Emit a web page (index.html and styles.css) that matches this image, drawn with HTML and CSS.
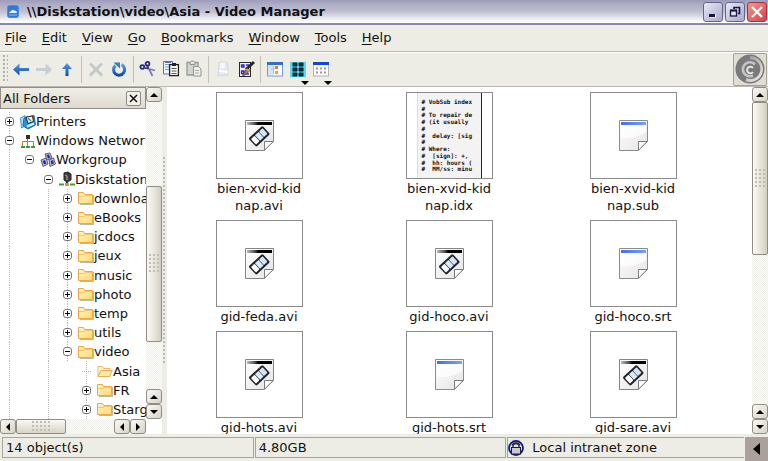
FILE: index.html
```html
<!DOCTYPE html>
<html lang="en">
<head>
<meta charset="utf-8">
<title>\\Diskstation\video\Asia - Video Manager</title>
<link rel="stylesheet" href="styles.css">
</head>
<body>
<svg class="defs" aria-hidden="true">
  <defs>
    <linearGradient id="blue" x1="0" y1="0" x2="0" y2="1"><stop offset="0" stop-color="#5b9be0"/><stop offset="1" stop-color="#0b4fa8"/></linearGradient>
    <linearGradient id="fold" x1="0" y1="0" x2="1" y2="1"><stop offset="0" stop-color="#fff6c8"/><stop offset="1" stop-color="#ffd970"/></linearGradient>
    <linearGradient id="bar" x1="0" y1="0" x2="1" y2="0"><stop offset="0" stop-color="#bbb"/><stop offset=".3" stop-color="#555"/><stop offset=".45" stop-color="#000"/><stop offset="1" stop-color="#000"/></linearGradient>
    <linearGradient id="bluebar" x1="0" y1="0" x2="1" y2="0"><stop offset="0" stop-color="#3f6ff0"/><stop offset="1" stop-color="#7ba0f8"/></linearGradient>
    <linearGradient id="paper" x1="0" y1="0" x2="1" y2="1"><stop offset="0" stop-color="#fff"/><stop offset="1" stop-color="#e4e4e4"/></linearGradient>
    <linearGradient id="ring" x1="0" y1="0" x2="1" y2="1"><stop offset="0" stop-color="#8a8a8a"/><stop offset="1" stop-color="#f4f4f4"/></linearGradient>
  </defs>
  <symbol id="folder" viewBox="0 0 16 14">
    <path d="M2 13.500H15.500V4" fill="none" stroke="#bcb8ae"/>
    <path d="M.500 12.500V1.500H5.500L6.500 3.500H14.500V12.500Z" fill="url(#fold)" stroke="#f2a840"/>
    <path d="M1 5.500H6L7.500 4.500H14" fill="none" stroke="#f8c468"/>
  </symbol>
  <symbol id="folder-open" viewBox="0 0 16 14">
    <path d="M1 12.500V2.500H5.500L6.500 4.500H13V6" fill="#fff3c0" stroke="#ebb968"/>
    <path d="M1 12.500L4 6.500H15.300L12.500 12.500Z" fill="#ffe9a4" stroke="#e2ae58"/>
  </symbol>
  <symbol id="video" viewBox="0 0 29 31">
    <path d="M.5.5H28.500V21.500L19.500 30.500H.5Z" fill="url(#paper)" stroke="#858585"/>
    <rect x="2" y="2" width="25" height="3" fill="url(#bar)"/>
    <g transform="translate(14.300 16.300) rotate(-43)">
      <rect x="-9.500" y="-5.700" width="19" height="11.400" rx="1.500" fill="#20252a"/>
      <rect x="-8" y="-3.700" width="4.800" height="7.400" rx=".8" fill="#fff"/><rect x="-2.500" y="-3.700" width="4.800" height="7.400" fill="#dcebfa"/><rect x="2.800" y="-3.700" width="5" height="7.400" rx=".8" fill="#d3e4f4"/>
    </g>
    <path d="M19.500 30.200V21.500H28.200Z" fill="#fff" stroke="#7c7c7c"/>
  </symbol>
  <symbol id="document" viewBox="0 0 29 31">
    <path d="M.5.5H28.500V21.500L19.500 30.500H.5Z" fill="url(#paper)" stroke="#8b8b8b"/>
    <path d="M2 5H27V12Q17 19 2 18Z" fill="#fff" opacity=".7"/>
    <rect x="2" y="2" width="25" height="3" fill="url(#bluebar)"/>
    <path d="M19.500 30.200V21.500H28.200Z" fill="#fff" stroke="#7c7c7c"/>
  </symbol>
</svg>

<div class="window">
  <header class="titlebar">
    <svg class="app-icon" viewBox="0 0 12 13"><rect x=".5" y=".5" width="11" height="12" rx="2" fill="#2f78dc" stroke="#4d8de6"/><path d="M2 8Q2 6 4 6.500Q5 3.500 7 5.500Q10 5 10 8Z" fill="#eaf3ff"/><path d="M2 10H10" stroke="#8fbcf8"/></svg>
    <h1>\\Diskstation\video\Asia - Video Manager</h1>
    <div class="window-buttons">
      <button type="button" aria-label="Minimize"><svg viewBox="0 0 18 18"><path d="M6 13H12" stroke="#fff" stroke-width="3"/><path d="M5 12.500H11" stroke="#15153f" stroke-width="3"/></svg></button>
      <button type="button" aria-label="Restore"><svg viewBox="0 0 18 18"><path d="M8 6V4.500H13.500V10.500H12M7.500 4.500H14" fill="none" stroke="#15153f" stroke-width="1.600"/><rect x="4.500" y="7.500" width="6" height="5.500" fill="#dfe0ee" stroke="#15153f" stroke-width="1.300"/><path d="M4 7.500H11" stroke="#15153f" stroke-width="2"/></svg></button>
      <button type="button" class="close" aria-label="Close"><svg viewBox="0 0 18 18"><path d="M4 4L14 14M14 4L4 14" stroke="#fff" stroke-width="2.300"/></svg></button>
    </div>
  </header>

  <nav class="menubar">
    <button type="button"><u>F</u>ile</button>
    <button type="button"><u>E</u>dit</button>
    <button type="button"><u>V</u>iew</button>
    <button type="button"><u>G</u>o</button>
    <button type="button"><u>B</u>ookmarks</button>
    <button type="button"><u>W</u>indow</button>
    <button type="button"><u>T</u>ools</button>
    <button type="button"><u>H</u>elp</button>
  </nav>

  <div class="toolbar">
    <span class="handle"></span>
    <button type="button" aria-label="Back"><svg viewBox="0 0 20 24"><path d="M2 12.500L8.500 6.500V11H18V14H8.500V18.500Z" fill="url(#blue)"/></svg></button>
    <button type="button" aria-label="Forward"><svg viewBox="0 0 20 24"><path d="M18 12.500L11.500 6.500V11H2V14H11.500V18.500Z" fill="#c8cdd1"/></svg></button>
    <button type="button" aria-label="Up"><svg viewBox="0 0 20 24"><path d="M10 6L15 12H11.500V19H8.500V12H5Z" fill="url(#blue)"/></svg></button>
    <span class="separator"></span>
    <button type="button" aria-label="Stop"><svg viewBox="0 0 20 24"><path d="M4 6.500L16 18.500M16 6.500L4 18.500" stroke="#c3c7cb" stroke-width="2.800"/></svg></button>
    <button type="button" aria-label="Reload"><svg viewBox="0 0 20 24"><path d="M12.500 7.700A5.500 5.500 0 1 1 6.500 8.500" fill="none" stroke="url(#blue)" stroke-width="3"/><path d="M4.500 5.500H11V11.500Z" fill="#3479c9"/></svg></button>
    <span class="separator"></span>
    <button type="button" aria-label="Cut"><svg viewBox="0 0 20 24"><path d="M7.500 11L17 13.500M9.500 9L14.500 19" stroke="#777dad" stroke-width="1.700"/><path d="M7 11L10 11.500L9.500 8.500" fill="none" stroke="#333d7d" stroke-width="1.300"/><circle cx="4.300" cy="10" r="1.900" fill="none" stroke="#252982" stroke-width="1.800"/><circle cx="9.500" cy="6.800" r="1.900" fill="none" stroke="#252982" stroke-width="1.800"/></svg></button>
    <button type="button" aria-label="Copy"><svg viewBox="0 0 20 24"><path d="M2.500 4.500H11.500V17H2.500Z" fill="#edf3ff" stroke="#6376a4"/><path d="M4 7.500H9M4 10H9M4 12.500H9" stroke="#7ea1d8"/><rect x="4" y="4" width="6" height="2" fill="#5272a4"/><rect x="8.600" y="7.600" width="8.800" height="11" fill="#fff" stroke="#25211c" stroke-width="1.300"/><rect x="11" y="6" width="4" height="3" fill="#25211c"/><path d="M10.500 11.500H15.500M10.500 14H15.500M10.500 16.500H15.500" stroke="#555"/></svg></button>
    <button type="button" aria-label="Paste"><svg viewBox="0 0 20 24"><path d="M3 5.500H14V18H3Z" fill="#d1d3cf" stroke="#989b98" stroke-width="1.300"/><path d="M6 7.500H11V5.500L9.500 4H7.500L6 5.500Z" fill="#e5e5df" stroke="#8e9291"/><path d="M9.500 9.500H14.500L17 12V19H9.500Z" fill="#f1f1eb" stroke="#8e9291"/><path d="M11 13.500H15M11 16H15" stroke="#aaa"/></svg></button>
    <span class="separator"></span>
    <button type="button" aria-label="Delete"><svg viewBox="0 0 20 24"><path d="M6.500 5H13.500L15 8V18L5 19Z" fill="#e2e7ee" stroke="#d4d9df"/><path d="M7 6L12 5.500V11L7 12Z" fill="#f4f7fc"/><path d="M6 14L15 15" stroke="#fff" stroke-width="2"/></svg></button>
    <button type="button" aria-label="Properties"><svg viewBox="0 0 20 24"><rect x="3.500" y="5.500" width="11" height="14" fill="#f4f4ff" stroke="#29272b"/><path d="M5.500 8H8V10H5.500ZM5.500 14H8V16.500H5.500Z" fill="#dcf" stroke="#2323d4" stroke-width="1.300"/><path d="M10 8H13M10 17H13" stroke="#223bbb" stroke-width="1.500"/><path d="M18 5L10 12.500" stroke="#2e2520" stroke-width="3"/><path d="M14.500 13L9.500 18L6.500 18.500L10 12.500Z" fill="#a07656" stroke="#423229" stroke-width=".7"/><path d="M10.500 12L13.500 14" stroke="#d9a267" stroke-width="2"/></svg></button>
    <span class="separator"></span>
    <button type="button" aria-label="Tree view"><svg viewBox="0 0 20 24"><rect x="2.500" y="6" width="15" height="13" fill="#f9fbff" stroke="#779bd1"/><rect x="2" y="5" width="16" height="3" fill="#326ed0"/><rect x="3" y="8" width="5" height="10" fill="#d4e4f7"/><path d="M6 12H10M8.500 9V17" stroke="#a9c2e2"/><rect x="10" y="9" width="3" height="3" fill="#f37817"/><rect x="10" y="14" width="3" height="3" fill="#ff9f17"/></svg></button>
    <button type="button" class="dropdown" aria-label="Thumbnails"><svg viewBox="0 0 20 24"><rect x="2" y="5" width="16" height="15" fill="#35c4e0"/><path d="M3 4V21M10 4V21M17 4V21" stroke="#96e4f1"/><path d="M5 6H9V9H5ZM11 6H15V9H11ZM5 11H9V14H5ZM11 11H15V14H11ZM5 16H9V19H5ZM11 16H15V19H11Z" fill="#063642" stroke="#05171c" stroke-width=".8"/></svg></button>
    <button type="button" class="dropdown" aria-label="View mode"><svg viewBox="0 0 20 24"><rect x="2.500" y="6" width="15" height="13" fill="#fafafa" stroke="#b5b5b5"/><rect x="2" y="5" width="16" height="3" fill="#1643dc"/><path d="M5 11.500H16M5 15.500H16" stroke="#999" stroke-width="2" stroke-dasharray="2 2"/></svg></button>
    <span class="throbber"><svg viewBox="0 0 30 30"><circle cx="15" cy="15" r="14.500" fill="#7a7a7a"/><path d="M15 2A13 13 0 1 1 10.500 27.200L11.500 24A9.800 9.800 0 1 0 6 17A10 10 0 0 1 15 5Z" fill="url(#ring)"/><path d="M20 10.500A7 7 0 1 0 18 21.500" fill="none" stroke="#c4c4c4" stroke-width="2.600"/><path d="M18 14A3.300 3.300 0 1 0 18 18" fill="none" stroke="#e4e4e4" stroke-width="2"/></svg></span>
  </div>

  <main class="workspace">
    <aside class="sidebar">
      <div class="tree-column">
        <div class="panel-header">
          <h2>All Folders</h2>
          <button type="button" aria-label="Close panel"><svg viewBox="0 0 13 13"><path d="M3 3L10 10M10 3L3 10" stroke="#111" stroke-width="1.500"/></svg></button>
        </div>
        <ul class="tree">
          <li class="level-0"><button type="button" class="expander" aria-label="Expand"></button><svg class="icon" viewBox="0 0 16 16"><path d="M.5 4L5 1.500V12L1.500 14Z" fill="#b7dcff" stroke="#3c95da"/><path d="M4 4L14 1.500L15.500 11L8 15L3 12Z" fill="#2596dd" stroke="#2a66a3"/><path d="M6 3L12.500 2L13.500 7.500L8 9.500Z" fill="#fff8bf" stroke="#222"/><path d="M8 4L11 7" stroke="#2b8fd0" stroke-width="1.500"/><path d="M7 12.500L14 9.500" stroke="#d9f1ff" stroke-width="2"/></svg><span>Printers</span></li>
          <li class="level-0"><button type="button" class="expander minus" aria-label="Collapse"></button><svg class="icon" viewBox="0 0 16 16"><path d="M7.500 5V13M2.500 13V8.500H13.500V13" fill="none" stroke="#d4762a"/><rect x="6" y="2" width="4" height="4" fill="#3c2c1c"/><path d="M1 14H5M6 14H10M11 14H15" stroke="#3f9834" stroke-width="2"/></svg><span>Windows Network</span></li>
          <li class="level-1"><button type="button" class="expander minus" aria-label="Collapse"></button><svg class="icon" viewBox="0 0 16 16"><g fill="#c8c8d8" stroke="#5c5c6b"><path d="M5 2L10 1L12 6L7 8Z"/><path d="M1 8L6 6L8 12L3 14.500Z"/><path d="M9 8L13.500 6L15.500 12L10 14.500Z"/></g><path d="M6.500 3L9 2.500L10.500 5.500L8 6.500ZM2.500 9L5 8L6.500 11.500L4 12.500ZM10.500 9L13 8L14 11.500L11.500 12.500Z" fill="#2f29c4"/></svg><span>Workgroup</span></li>
          <li class="level-2"><button type="button" class="expander minus" aria-label="Collapse"></button><svg class="icon" viewBox="0 0 16 16"><path d="M5 2L9 1L12 3V9L8 11L5 9Z" fill="#3c3c3e" stroke="#222"/><path d="M6 4L8 5V9" fill="none" stroke="#b9b9b9"/><path d="M8 11V13" stroke="#333" stroke-width="2"/><path d="M0 13.500H5M11 13.500H16" stroke="#3ba337" stroke-width="2"/><rect x="6" y="12" width="4" height="3" fill="#d99031"/></svg><span>Diskstation</span></li>
          <li class="level-3"><button type="button" class="expander" aria-label="Expand"></button><svg class="icon"><use href="#folder"/></svg><span>downloads</span></li>
          <li class="level-3"><button type="button" class="expander" aria-label="Expand"></button><svg class="icon"><use href="#folder"/></svg><span>eBooks</span></li>
          <li class="level-3"><button type="button" class="expander" aria-label="Expand"></button><svg class="icon"><use href="#folder"/></svg><span>jcdocs</span></li>
          <li class="level-3"><button type="button" class="expander" aria-label="Expand"></button><svg class="icon"><use href="#folder"/></svg><span>jeux</span></li>
          <li class="level-3"><button type="button" class="expander" aria-label="Expand"></button><svg class="icon"><use href="#folder"/></svg><span>music</span></li>
          <li class="level-3"><button type="button" class="expander" aria-label="Expand"></button><svg class="icon"><use href="#folder"/></svg><span>photo</span></li>
          <li class="level-3"><button type="button" class="expander" aria-label="Expand"></button><svg class="icon"><use href="#folder"/></svg><span>temp</span></li>
          <li class="level-3"><button type="button" class="expander" aria-label="Expand"></button><svg class="icon"><use href="#folder"/></svg><span>utils</span></li>
          <li class="level-3"><button type="button" class="expander minus" aria-label="Collapse"></button><svg class="icon"><use href="#folder"/></svg><span>video</span></li>
          <li class="level-4"><span class="leaf"></span><svg class="icon"><use href="#folder-open"/></svg><span>Asia</span></li>
          <li class="level-4"><button type="button" class="expander" aria-label="Expand"></button><svg class="icon"><use href="#folder"/></svg><span>FR</span></li>
          <li class="level-4"><button type="button" class="expander" aria-label="Expand"></button><svg class="icon"><use href="#folder"/></svg><span>Stargate</span></li>
        </ul>
        <div class="scrollbar horizontal">
          <button type="button" class="left" aria-label="Scroll left"></button>
          <div class="thumb"><span class="grip"></span></div>
          <div class="track"></div>
          <button type="button" class="left" aria-label="Scroll left"></button>
          <button type="button" class="right" aria-label="Scroll right"></button>
        </div>
      </div>
      <div class="scrollbar vertical tree-scroll">
        <button type="button" class="up" aria-label="Scroll up"></button>
        <div class="track before"></div>
        <div class="thumb"><span class="grip"></span></div>
        <div class="track after"></div>
        <button type="button" class="up" aria-label="Scroll up"></button>
        <button type="button" class="down" aria-label="Scroll down"></button>
      </div>
    </aside>
    <div class="splitter"><span></span></div>
    <section class="files">
      <figure><div class="thumbnail"><svg><use href="#video"/></svg></div><figcaption>bien-xvid-kid<br>nap.avi</figcaption></figure>
      <figure><div class="thumbnail"><div class="preview"><span># VobSub index</span><span>#</span><span># To repair de</span><span># (it usually</span><span>#</span><span>#  delay: [sig</span><span>#</span><span># Where:</span><span>#  [sign]: +,</span><span>#  hh: hours (</span><span>#  MM/ss: minu</span></div></div><figcaption>bien-xvid-kid<br>nap.idx</figcaption></figure>
      <figure><div class="thumbnail"><svg><use href="#document"/></svg></div><figcaption>bien-xvid-kid<br>nap.sub</figcaption></figure>
      <figure><div class="thumbnail"><svg><use href="#video"/></svg></div><figcaption>gid-feda.avi</figcaption></figure>
      <figure><div class="thumbnail"><svg><use href="#video"/></svg></div><figcaption>gid-hoco.avi</figcaption></figure>
      <figure><div class="thumbnail"><svg><use href="#document"/></svg></div><figcaption>gid-hoco.srt</figcaption></figure>
      <figure><div class="thumbnail"><svg><use href="#video"/></svg></div><figcaption>gid-hots.avi</figcaption></figure>
      <figure><div class="thumbnail"><svg><use href="#document"/></svg></div><figcaption>gid-hots.srt</figcaption></figure>
      <figure><div class="thumbnail"><svg><use href="#video"/></svg></div><figcaption>gid-sare.avi</figcaption></figure>
    </section>
    <div class="scrollbar vertical file-scroll">
      <button type="button" class="up" aria-label="Scroll up"></button>
      <div class="thumb"><span class="grip"></span></div>
      <div class="track after"></div>
      <button type="button" class="up" aria-label="Scroll up"></button>
      <button type="button" class="down" aria-label="Scroll down"></button>
    </div>
  </main>

  <footer class="statusbar">
    <span class="field">14 object(s)</span>
    <span class="field">4.80GB</span>
    <span class="field zone"><svg viewBox="0 0 16 16"><circle cx="8" cy="8" r="7" fill="#dcdce8" stroke="#17178b" stroke-width="1.800"/><path d="M4 5Q8 1 12 5M5 7V5Q8 2 11 5V7" fill="none" stroke="#222" stroke-width="1.300"/><rect x="3.500" y="7.500" width="9" height="6.500" fill="#c9c9cf" stroke="#222"/></svg>Local intranet zone</span>
    <button type="button" class="left" aria-label="Show tray"></button>
  </footer>
</div>
</body>
</html>
```
FILE: styles.css
```css
* { box-sizing: border-box; }

:root {
  --face: #edece5;
  --line: #bab9b1;
  --edge: #8f8d84;
}

body {
  margin: 0;
  font: 13px/17px "DejaVu Sans", sans-serif;
  color: #111;
}

button {
  margin: 0;
  padding: 0;
  border: 0;
  background: none;
  font: inherit;
  color: inherit;
}

svg { display: block; flex: none; }
.defs { position: absolute; width: 0; height: 0; }

.window {
  display: flex;
  flex-direction: column;
  height: 100vh;
  background: var(--face);
  overflow: hidden;
}

/* Title bar */
.titlebar {
  display: flex;
  align-items: center;
  flex: none;
  height: 25px;
  padding: 0 1px 0 7px;
  gap: 8px;
  border-bottom: 2px solid #8989a8;
  background: linear-gradient(#9d9dbb, #adadc4 20%, #c0c0d2 50%, #f4f4f8 88%, #fff);
}
.app-icon { width: 12px; height: 13px; }
.titlebar h1 { flex: 1; margin: 0; font-size: 13px; line-height: 23px; }
.window-buttons { display: flex; gap: 2px; }
.window-buttons button {
  width: 20px;
  height: 20px;
  border: 1px solid #66668c;
  border-radius: 3px;
  background: linear-gradient(135deg, #e9e9f4, #a9a9c8);
}
.window-buttons svg { width: 18px; height: 18px; }
.window-buttons .close { border-color: #9b3446; background: linear-gradient(135deg, #f4988a, #d24350); }

/* Menu bar */
.menubar {
  display: flex;
  flex: none;
  height: 26px;
  padding: 0 5px 1px;
  gap: 15px;
  align-items: center;
}
.menubar u { text-underline-offset: 2px; }

/* Toolbar */
.toolbar {
  display: flex;
  flex: none;
  align-items: center;
  height: 36px;
  padding: 0 1px 0 3px;
  gap: 3px;
  border-top: 1px solid var(--line);
  border-bottom: 1px solid var(--line);
  box-shadow: inset 0 1px #fff;
}
.toolbar button { position: relative; width: 20px; height: 24px; }
.toolbar button svg { width: 20px; height: 24px; }
.handle {
  width: 5px;
  height: 28px;
  background:
    linear-gradient(#b4b3ab, #b4b3ab) 0 0 / 0 0,
    radial-gradient(circle at 1px 1px, #b4b3ab 1px, transparent 1px) 0 0 / 4px 4px;
}
.separator { width: 1px; height: 27px; margin: 0 1px; background: #c2c1b9; }
.dropdown::after {
  content: "";
  position: absolute;
  right: -1px;
  bottom: -4px;
  border: 4px solid transparent;
  border-top-color: #000;
  border-bottom: 0;
}
.throbber {
  display: grid;
  place-items: center;
  width: 34px;
  height: 33px;
  margin-left: auto;
  border: 1px solid #a5a397;
  border-radius: 2px;
  background: #e0ddd2;
}
.throbber svg { width: 30px; height: 30px; }

/* Workspace */
.workspace { display: flex; flex: 1; min-height: 0; }
.sidebar { display: flex; width: 162px; flex: none; background: #fff; }
.tree-column { display: flex; flex-direction: column; flex: 1; min-width: 0; }
.panel-header {
  display: flex;
  justify-content: space-between;
  align-items: center;
  flex: none;
  height: 22px;
  padding: 0 4px 0 2px;
  border: 1px solid var(--edge);
  background: linear-gradient(#f0eee7, #dedacf);
}
.panel-header h2 { margin: 0; font-size: 13px; font-weight: 400; }
.panel-header button { width: 15px; height: 15px; border: 1px solid #888; border-radius: 2px; background: #f2f0e9; }
.panel-header svg { width: 13px; height: 13px; }

.tree {
  display: flex;
  flex-direction: column;
  flex: 1;
  min-height: 0;
  margin: 0;
  padding: 3px 0 0;
  list-style: none;
  overflow: hidden;
}
.tree li {
  --dots: repeating-linear-gradient(#bbb 0 1px, transparent 1px 2px);
  display: flex;
  flex: 1;
  align-items: center;
  min-height: 0;
  white-space: nowrap;
  background: var(--dots) 9px 0 / 1px 100% no-repeat;
}
.tree .level-0 { padding-left: 5px; }
.tree .level-1 { padding-left: 25px; }
.tree .level-2 { padding-left: 44px; }
.tree .level-3 {
  padding-left: 63px;
  background: var(--dots) 9px 0 / 1px 100% no-repeat, var(--dots) 48px 0 / 1px 100% no-repeat, var(--dots) 67px 0 / 1px 100% no-repeat;
}
.tree .level-4 {
  padding-left: 82px;
  background: var(--dots) 9px 0 / 1px 100% no-repeat, var(--dots) 48px 0 / 1px 100% no-repeat, var(--dots) 86px 0 / 1px 100% no-repeat;
}
.expander {
  position: relative;
  flex: none;
  width: 9px;
  height: 9px;
  margin-right: 6px;
  border: 1px solid #777;
  border-radius: 3px;
  background: #fff;
}
.expander::before, .expander::after {
  content: "";
  position: absolute;
  inset: 3px 1px;
  background: #000;
}
.expander::after { inset: 1px 3px; }
.expander.minus::after { display: none; }
.leaf { width: 9px; height: 1px; margin-right: 6px; border-top: 1px dotted #aaa; }
.tree .icon { width: 16px; height: 16px; }
.level-3 .icon, .level-4 .icon { height: 14px; }

.splitter { display: grid; align-items: center; width: 5px; flex: none; }
.splitter span {
  height: 208px;
  background: radial-gradient(circle at 1px 1px, #bbb 1px, transparent 1px) 1px 0 / 5px 4px;
}

/* Scroll bars */
.scrollbar { display: flex; flex: none; background: #f5f5ef; }
.vertical { flex-direction: column; width: 16px; }
.horizontal { height: 15px; }
.scrollbar button {
  display: grid;
  place-items: center;
  flex: none;
  width: 16px;
  height: 15px;
  border: 1px solid var(--edge);
  border-radius: 3px;
  background: linear-gradient(135deg, #faf9f5, #d7d3c7);
}
.scrollbar button::after, .statusbar button::after { content: ""; border: 4px solid transparent; }
.scrollbar .up::after { border-top: 0; border-bottom-color: #000; }
.scrollbar .down::after { border-bottom: 0; border-top-color: #000; }
.scrollbar .left::after, .statusbar .left::after { border-left: 0; border-right-color: #000; }
.scrollbar .right::after { border-right: 0; border-left-color: #000; }
.track {
  background: repeating-conic-gradient(#f0f0ea 0 25%, #fbfbf8 0 50%) 0 0 / 2px 2px;
}
.thumb {
  display: grid;
  place-items: center;
  border: 1px solid var(--edge);
  border-radius: 2px;
  background: linear-gradient(90deg, #faf9f5, #e5e2d9 60%, #d2cec2);
}
.horizontal .thumb { width: 50px; background: linear-gradient(#faf9f5, #d7d3c7); }
.horizontal .track { flex: 1; }
.grip {
  width: 11px;
  height: 19px;
  background: radial-gradient(circle at 1px 1px, #c0bdb2 1px, transparent 1px) 0 0 / 4px 4px;
}
.horizontal .grip { width: 19px; height: 11px; }
.tree-scroll .before { flex: 85; }
.tree-scroll .thumb { flex: 155; }
.tree-scroll .after { flex: 48; }
.tree-scroll { margin-bottom: 15px; }
.file-scroll .thumb { flex: 152; }
.file-scroll .after { flex: 150; }

/* File thumbnails */
.files {
  display: grid;
  grid-template-columns: 184fr 196fr 172fr 33fr;
  align-content: start;
  row-gap: 6px;
  flex: 1;
  padding-top: 5px;
  background: #fff;
  overflow: hidden;
}
figure {
  display: flex;
  flex-direction: column;
  align-items: center;
  gap: 1px;
  margin: 0;
  text-align: center;
}
figure:nth-child(3n + 1) { grid-column: 1; }
.thumbnail {
  display: grid;
  place-items: center;
  width: 87px;
  height: 87px;
  border: 1px solid #8b8b8b;
}
.thumbnail svg { width: 29px; height: 31px; }
.preview {
  display: flex;
  flex-direction: column;
  width: 65px;
  height: 85px;
  padding: 5px 0 6px 4px;
  border-left: 1px solid #ddd;
  border-right: 1px solid #222;
  background: #f3f3f4;
  font: bold 6px/7px "DejaVu Sans Mono", monospace;
  text-align: left;
  white-space: pre;
  overflow: hidden;
}
.preview span { flex: 1; min-height: 0; }

/* Status bar */
.statusbar {
  display: grid;
  grid-template-columns: 252fr 252fr 237fr 23px;
  flex: none;
  height: 27px;
  padding-left: 2px;
  column-gap: 1px;
}
.field {
  display: flex;
  align-items: center;
  height: 21px;
  margin-top: 3px;
  padding: 0 3px;
  border: 1px solid #a6a59d;
}
.zone { gap: 8px; padding-left: 0; border-right: 0; }
.zone svg { width: 16px; height: 16px; }
.statusbar button { display: grid; place-items: center; margin-top: 3px; background: #aba09b; }
.statusbar button::after { border-width: 6px; border-right-width: 7px; }
```
